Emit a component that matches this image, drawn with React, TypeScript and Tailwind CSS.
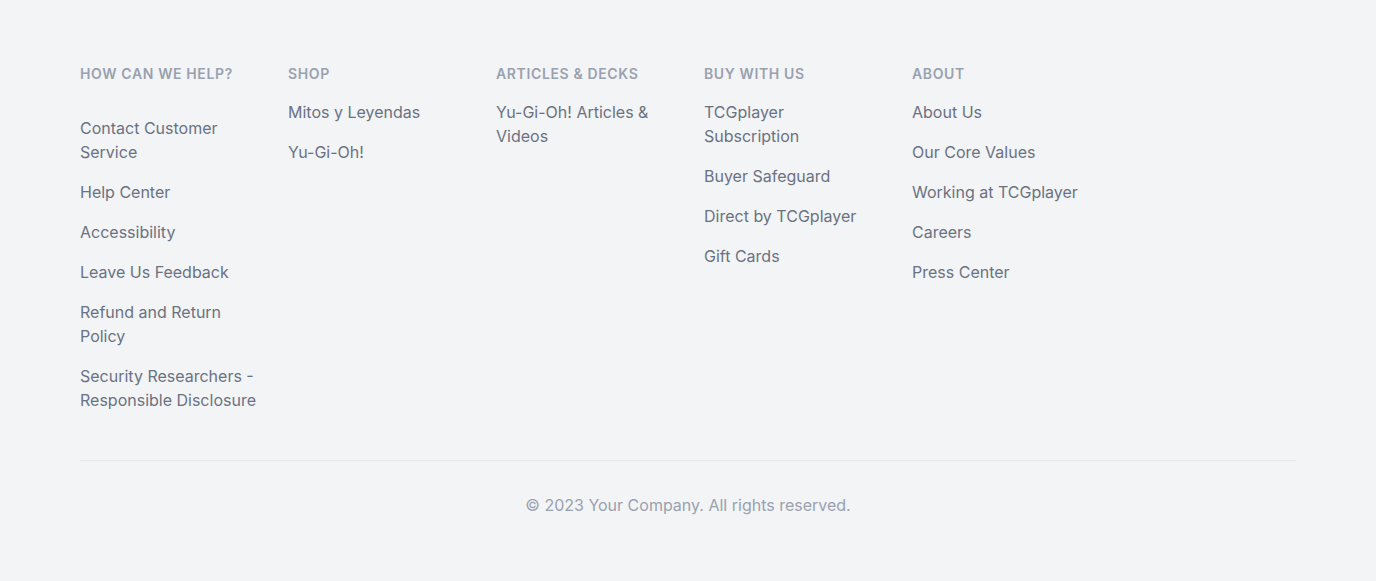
import React from 'react';

const columns: { title: string; links: string[]; offset?: boolean }[] = [
  {
    title: 'How can we help?',
    offset: true,
    links: [
      'Contact Customer Service',
      'Help Center',
      'Accessibility',
      'Leave Us Feedback',
      'Refund and Return Policy',
      'Security Researchers - Responsible Disclosure',
    ],
  },
  { title: 'Shop', links: ['Mitos y Leyendas', 'Yu-Gi-Oh!'] },
  { title: 'Articles & Decks', links: ['Yu-Gi-Oh! Articles & Videos'] },
  {
    title: 'Buy With Us',
    links: ['TCGplayer Subscription', 'Buyer Safeguard', 'Direct by TCGplayer', 'Gift Cards'],
  },
  {
    title: 'About',
    links: ['About Us', 'Our Core Values', 'Working at TCGplayer', 'Careers', 'Press Center'],
  },
];

export default function App() {
  return (
    <footer className="min-h-[581px] bg-gray-100 font-['Inter',sans-serif]">
      <div className="mx-auto max-w-[1376px] px-20 pt-16 pb-16">
        <div className="grid grid-cols-6 gap-8">
          {columns.map((col) => (
            <div key={col.title}>
              <h3 className="text-sm font-semibold uppercase leading-5 tracking-[0.045em] text-gray-400">
                {col.title}
              </h3>
              <ul className={`${col.offset ? 'mt-8' : 'mt-4'} space-y-4`}>
                {col.links.map((link) => (
                  <li key={link}>
                    <a href="#" className="text-base leading-6 text-gray-500 hover:text-gray-900">
                      {link}
                    </a>
                  </li>
                ))}
              </ul>
            </div>
          ))}
        </div>
        <div className="mt-12 border-t border-gray-200 pt-8">
          <p className="text-center text-base leading-6 text-gray-400">
            &copy; 2023 Your Company. All rights reserved.
          </p>
        </div>
      </div>
    </footer>
  );
}
